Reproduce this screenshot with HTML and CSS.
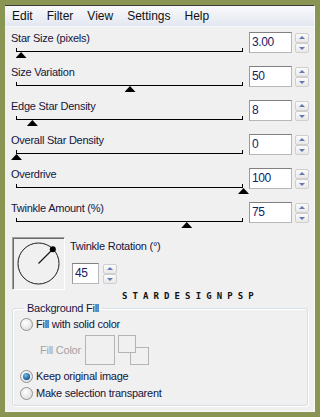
FILE: index.html
```html
<!DOCTYPE html>
<html lang="en">
<head>
  <meta charset="UTF-8">
  <title>Star Field</title>
  <link rel="stylesheet" href="styles.css">
</head>
<body>
  <div class="window">
    <ul class="menubar">
      <li>Edit</li>
      <li>Filter</li>
      <li>View</li>
      <li>Settings</li>
      <li>Help</li>
    </ul>

    <div class="content">
      <div class="param">
        <div class="ctl">
          <div class="label">Star Size (pixels)</div>
          <div class="track"><span class="thumb" style="--v:0.02"></span></div>
        </div>
        <div class="field">3.00</div>
        <div class="spin"><span class="up"></span><span class="down"></span></div>
      </div>

      <div class="param">
        <div class="ctl">
          <div class="label">Size Variation</div>
          <div class="track"><span class="thumb" style="--v:0.5"></span></div>
        </div>
        <div class="field">50</div>
        <div class="spin"><span class="up"></span><span class="down"></span></div>
      </div>

      <div class="param">
        <div class="ctl">
          <div class="label">Edge Star Density</div>
          <div class="track"><span class="thumb" style="--v:0.07"></span></div>
        </div>
        <div class="field">8</div>
        <div class="spin"><span class="up"></span><span class="down"></span></div>
      </div>

      <div class="param">
        <div class="ctl">
          <div class="label">Overall Star Density</div>
          <div class="track"><span class="thumb" style="--v:0"></span></div>
        </div>
        <div class="field">0</div>
        <div class="spin"><span class="up"></span><span class="down"></span></div>
      </div>

      <div class="param">
        <div class="ctl">
          <div class="label">Overdrive</div>
          <div class="track"><span class="thumb" style="--v:1"></span></div>
        </div>
        <div class="field">100</div>
        <div class="spin"><span class="up"></span><span class="down"></span></div>
      </div>

      <div class="param">
        <div class="ctl">
          <div class="label">Twinkle Amount (%)</div>
          <div class="track"><span class="thumb" style="--v:0.75"></span></div>
        </div>
        <div class="field">75</div>
        <div class="spin"><span class="up"></span><span class="down"></span></div>
      </div>

      <div class="rotation">
        <div class="dial">
          <svg width="51" height="51" viewBox="0 0 51 51">
            <circle cx="25.5" cy="25.5" r="20.5" fill="none" stroke="#1a1a1a" stroke-width="1"/>
            <line x1="25.5" y1="25.5" x2="39.5" y2="11.5" stroke="#1a1a1a" stroke-width="1.2"/>
            <circle cx="39.8" cy="11.2" r="3" fill="#000"/>
          </svg>
        </div>
        <div class="rot-side">
          <div class="label">Twinkle Rotation (°)</div>
          <div class="rot-input">
            <div class="field small">45</div>
            <div class="spin"><span class="up"></span><span class="down"></span></div>
          </div>
        </div>
      </div>

      <div class="mark">STARDESIGNPSP</div>

      <fieldset class="group">
        <legend>Background Fill</legend>
        <div class="radio"><span class="dot"></span>Fill with solid color</div>
        <div class="fill-row">
          <span class="fill-label">Fill Color</span>
          <span class="swatch"></span>
          <span class="pair"><span class="sq back"></span><span class="sq front"></span></span>
        </div>
        <div class="radio gap"><span class="dot on"></span>Keep original image</div>
        <div class="radio"><span class="dot"></span>Make selection transparent</div>
      </fieldset>
    </div>
  </div>
</body>
</html>
```

FILE: styles.css
```css
body {
  margin: 0;
  padding: 5px;
  background: #8b9553;
  font-family: "Liberation Sans", Arial, sans-serif;
  font-size: 11px;
  letter-spacing: -0.25px;
  color: #15153e;
}

.window {
  width: 310px;
  height: 407px;
  box-sizing: border-box;
  background: #f0f0f0;
  border-top: 1px solid #3a3a3a;
  border-right: 1px solid #fafafa;
  border-bottom: 1px solid #fafafa;
}

.menubar {
  display: flex;
  margin: 0;
  padding: 0;
  list-style: none;
  height: 20px;
  line-height: 20px;
  font-size: 12px;
  letter-spacing: 0;
  color: #111;
  background: linear-gradient(#f8f9fc, #e3e7f0);
  border-bottom: 1px solid #f4f6fa;
}

.menubar li {
  padding: 0 7px;
}

.content {
  padding: 5px 0 0 6px;
}

/* slider rows */
.param {
  display: flex;
  height: 34px;
}

.ctl {
  width: 238px;
}

.label {
  height: 13px;
  line-height: 13px;
  white-space: nowrap;
}

.track {
  position: relative;
  width: 225px;
  height: 3px;
  margin: 3px 0 0 5px;
  border: 1px solid #000;
  border-top: 0;
}

.thumb {
  position: absolute;
  top: calc(100% + 1px);
  left: calc(var(--v) * (100% + 2px) - 6px);
  width: 11px;
  height: 6px;
  background: #000;
  clip-path: polygon(50% 0, 100% 100%, 0 100%);
}

.field {
  width: 43px;
  height: 21px;
  box-sizing: border-box;
  padding-left: 2px;
  background: #fff;
  border: 1px solid #b5b7bd;
  border-top-color: #808080;
  border-left-color: #9a9a9a;
  font-size: 12px;
  line-height: 19px;
  letter-spacing: -0.4px;
  color: #14206a;
}

.field.small {
  width: 27px;
}

.spin {
  display: flex;
  flex-direction: column;
  width: 14px;
  height: 20px;
  margin: 1px 0 0 3px;
}

.spin span {
  position: relative;
  height: 10px;
  box-sizing: border-box;
  border: 1px solid #cfcfcf;
  border-radius: 2px;
  background: linear-gradient(#fbfbfb, #e8e8e8);
}

.spin span::after {
  content: "";
  position: absolute;
  left: 3px;
  top: 2px;
  border-left: 3px solid transparent;
  border-right: 3px solid transparent;
}

.spin .up::after {
  border-bottom: 3px solid #6676b4;
}

.spin .down::after {
  top: 3px;
  border-top: 3px solid #6676b4;
}

/* rotation dial */
.rotation {
  display: flex;
  margin-top: 1px;
}

.dial {
  width: 53px;
  height: 53px;
  margin-left: 1px;
  box-sizing: border-box;
  border: 1px solid;
  border-color: #a0a0a0 #fff #fff #a0a0a0;
  box-shadow: inset 1px 1px #6b6b6b;
}

.dial svg {
  display: block;
}

.rot-side {
  margin-left: 5px;
  padding-top: 3px;
}

.rot-input {
  display: flex;
  margin: 10px 0 0 2px;
}

.rot-input .spin {
  margin-left: 4px;
}

.mark {
  margin: 2px 0 0 111px;
  font-family: "DejaVu Sans Mono", monospace;
  font-weight: bold;
  font-size: 9px;
  line-height: 9px;
  letter-spacing: 5.1px;
  color: #111;
}

/* background fill group */
.group {
  width: 296px;
  height: 104px;
  box-sizing: border-box;
  margin: 1px 0 0 1px;
  padding: 4px 0 0 7px;
  border: 1px solid #d5dfe5;
  border-radius: 3px;
  box-shadow: inset 1px 1px #fff, 1px 1px #fff;
}

.group legend {
  margin-left: 4px;
  padding: 0 3px;
  line-height: 12px;
}

.radio {
  display: flex;
  align-items: center;
  height: 13px;
  line-height: 13px;
  margin-bottom: 4px;
  white-space: nowrap;
}

.radio.gap {
  margin-top: 5px;
}

.dot {
  position: relative;
  width: 13px;
  height: 13px;
  margin-right: 3px;
  box-sizing: border-box;
  border: 1px solid #929292;
  border-radius: 50%;
  background: radial-gradient(circle at 40% 35%, #fff, #d6d6d6);
}

.dot.on::after {
  content: "";
  position: absolute;
  left: 2px;
  top: 2px;
  width: 7px;
  height: 7px;
  border-radius: 50%;
  background: radial-gradient(circle at 40% 35%, #6fc3f0, #11558f 70%);
}

.fill-row {
  display: flex;
  align-items: center;
  height: 30px;
  margin-left: 20px;
}

.fill-label {
  width: 45px;
  color: #a3a3a3;
}

.swatch {
  width: 30px;
  height: 30px;
  box-sizing: border-box;
  border: 1px solid #b4b4b4;
}

.pair {
  position: relative;
  width: 31px;
  height: 30px;
  margin-left: 3px;
}

.sq {
  position: absolute;
  box-sizing: border-box;
  border: 1px solid #b4b4b4;
  background: #f0f0f0;
}

.sq.back {
  left: 12px;
  top: 12px;
  width: 19px;
  height: 18px;
}

.sq.front {
  left: 0;
  top: 0;
  width: 18px;
  height: 18px;
}
```
